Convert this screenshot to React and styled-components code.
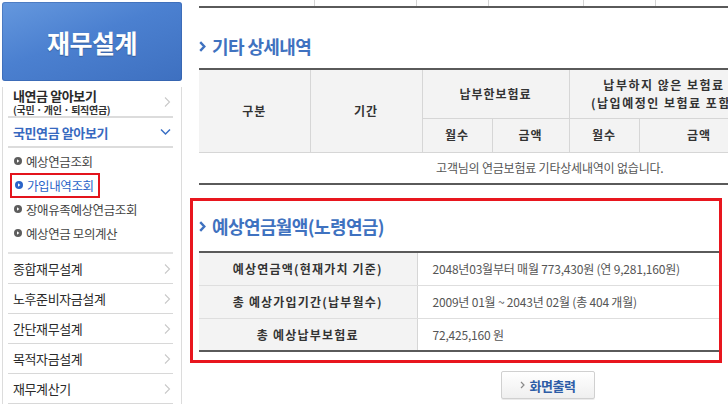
import React from 'react';
import styled, { createGlobalStyle } from 'styled-components';

const Global = createGlobalStyle`
  html, body { margin: 0; padding: 0; background: #fff; }
  body {
    width: 728px; height: 406px; overflow: hidden;
    font-family: "Noto Sans CJK KR", "Noto Sans", sans-serif;
    color: #333;
  }
  * { box-sizing: border-box; }
`;

const Page = styled.div`
  display: flex;
  align-items: flex-start;
  width: 728px;
  height: 406px;
  overflow: hidden;
`;

/* ---------- Sidebar ---------- */
const Sidebar = styled.aside`
  width: 180px;
  margin: 2px 0 0 2px;
  flex-shrink: 0;
`;

const Brand = styled.div`
  height: 79px;
  border-radius: 3px;
  background: linear-gradient(160deg, #6598de 0%, #4b80d0 45%, #3e70c0 100%);
  box-shadow: inset 0 0 0 1px rgba(40, 80, 150, 0.35);
  display: flex;
  align-items: center;
  justify-content: center;
  color: #fff;
  font-size: 25px;
  font-weight: 700;
  letter-spacing: -0.5px;
  text-shadow: 0 1px 1px rgba(0, 0, 0, 0.25);
`;

const Nav = styled.nav`
  margin-top: 6px;
  border-left: 1px solid #dcdcdc;
  border-right: 1px solid #dcdcdc;
  padding: 0 8px 0 5px;
`;

const NavItem = styled.div`
  position: relative;
  display: flex;
  flex-direction: column;
  justify-content: center;
  height: ${p => p.$h}px;
  padding: 0 5px;
  border-bottom: ${p => p.$bw}px solid ${p => p.$bc};
  color: ${p => (p.$active ? '#3769c0' : '#2a2a2a')};
  font-size: 13px;
  font-weight: ${p => (p.$bold ? 700 : 400)};
  letter-spacing: -0.4px;
  line-height: 15px;
`;

const NavSub = styled.span`
  font-size: 10px;
  line-height: 12px;
  font-weight: 700;
  letter-spacing: -0.3px;
  color: #333;
  margin-top: 1px;
`;

const Chevron = styled.svg`
  position: absolute;
  right: 2px;
  top: 50%;
  transform: translateY(-50%);
`;

const SubList = styled.ul`
  list-style: none;
  margin: 0;
  padding: 1px 0 7px;
  border-bottom: 2px solid #e3e3e3;
`;

const SubItem = styled.li`
  display: flex;
  align-items: center;
  gap: 4px;
  height: 24px;
  padding-left: 6px;
  font-size: 12.5px;
  letter-spacing: -0.4px;
  color: ${p => (p.$active ? '#2a63c8' : '#444')};
`;

const Highlight = styled.span`
  display: inline-flex;
  align-items: center;
  gap: 4px;
  margin-left: -4px;
  padding: 1px 4px 1px 3px;
  border: 2px solid #e3141c;
`;

const Bullet = ({ color }) => (
  <svg width="8" height="8" viewBox="0 0 8 8">
    <circle cx="4" cy="4" r="4" fill={color} />
    <path d="M3 2.2 L5.4 4 L3 5.8 Z" fill="#fff" />
  </svg>
);

const RightChevron = () => (
  <Chevron width="7" height="11" viewBox="0 0 7 11">
    <path d="M1 1 L5.5 5.5 L1 10" fill="none" stroke="#c9c9c9" strokeWidth="1.1" />
  </Chevron>
);

const DownChevron = () => (
  <Chevron width="11" height="7" viewBox="0 0 11 7">
    <path d="M1 1 L5.5 5.5 L10 1" fill="none" stroke="#3a6fc4" strokeWidth="1.5" />
  </Chevron>
);

/* ---------- Main ---------- */
const Main = styled.main`
  width: 702px;
  flex-shrink: 0;
  margin-left: 17px;
`;

const Remnant = styled.div`
  display: grid;
  grid-template-columns: 116px 102px 72px 95px 72px 1fr;
  height: 8px;
  border-bottom: 2px solid #5a5a5a;
`;

const RemnantCell = styled.div`
  border-right: 1px solid #d4d4d4;
`;

const Heading = styled.h2`
  display: flex;
  align-items: center;
  gap: 6px;
  margin: ${p => p.$mt}px 0 0;
  height: 22px;
  font-size: 18px;
  font-weight: 700;
  letter-spacing: -0.6px;
  color: #3f72c0;
`;

const HeadChevron = () => (
  <svg width="7" height="11" viewBox="0 0 7 11">
    <path d="M1.2 1.2 L5.3 5.5 L1.2 9.8" fill="none" stroke="#3f72c0" strokeWidth="2.4" />
  </svg>
);

const Table = styled.table`
  width: ${p => p.$w}px;
  margin-top: ${p => p.$mt}px;
  border-collapse: collapse;
  table-layout: fixed;
  border-top: 2px solid #5a5a5a;
  border-bottom: 2px solid #5a5a5a;
  font-size: 12px;
`;

const Th = styled.th`
  height: ${p => p.$h}px;
  padding: 0;
  background: #f3f3f3;
  border: 1px solid #d6d6d6;
  border-top: none;
  font-weight: 700;
  color: #333;
  letter-spacing: ${p => p.$ls || 1}px;
  line-height: 18px;
  text-align: center;
  white-space: nowrap;
  &:first-child { border-left: none; }
`;

const Td = styled.td`
  height: ${p => p.$h}px;
  padding: 0 0 0 ${p => p.$pl || 0}px;
  border-bottom: 1px solid #dedede;
  color: #555;
  letter-spacing: -0.2px;
  text-align: ${p => p.$align || 'left'};
  white-space: nowrap;
`;

const RowHead = styled.th`
  width: 218px;
  height: 33px;
  padding: 0;
  background: #f3f3f3;
  border-bottom: 1px solid #dedede;
  border-right: 1px solid #d6d6d6;
  font-weight: 700;
  color: #333;
  letter-spacing: 1.2px;
  text-align: center;
  white-space: nowrap;
`;

const Marked = styled.section`
  width: 532px;
  height: 165px;
  margin: 13px 0 0 -9px;
  padding: 14px 0 0 6px;
  border: 3px solid #e8161e;
  overflow: hidden;
`;

const ButtonRow = styled.div`
  display: flex;
  justify-content: center;
  margin-top: 8px;
  padding-right: 4px;
`;

const PrintButton = styled.button`
  display: flex;
  align-items: center;
  justify-content: center;
  gap: 4px;
  width: 94px;
  height: 28px;
  border: 1px solid #d0d0d0;
  border-radius: 2px;
  background: linear-gradient(#ffffff, #efefef);
  box-shadow: 0 1px 0 rgba(0, 0, 0, 0.08);
  font-family: inherit;
  font-size: 13px;
  font-weight: 700;
  letter-spacing: -0.4px;
  color: #2e5da6;
  padding: 0;
`;

const menu = ['종합재무설계', '노후준비자금설계', '간단재무설계', '목적자금설계', '재무계산기'];
const subs = ['예상연금조회', '가입내역조회', '장애유족예상연금조회', '예상연금 모의계산'];

export default function App() {
  return (
    <Page>
      <Global />
      <Sidebar>
        <Brand>재무설계</Brand>
        <Nav>
          <NavItem $h={31} $bw={2} $bc="#dcdcdc" $bold>
            내연금 알아보기
            <NavSub>(국민 · 개인 · 퇴직연금)</NavSub>
            <RightChevron />
          </NavItem>
          <NavItem $h={30} $bw={2} $bc="#dcdcdc" $bold $active>
            국민연금 알아보기
            <DownChevron />
          </NavItem>
          <SubList>
            {subs.map(s =>
              s === '가입내역조회' ? (
                <SubItem key={s} $active>
                  <Highlight>
                    <Bullet color="#2a63c8" />
                    {s}
                  </Highlight>
                </SubItem>
              ) : (
                <SubItem key={s}>
                  <Bullet color="#5d5d5d" />
                  {s}
                </SubItem>
              )
            )}
          </SubList>
          {menu.map(m => (
            <NavItem key={m} $h={30} $bw={1} $bc="#d8d8d8">
              {m}
              <RightChevron />
            </NavItem>
          ))}
        </Nav>
      </Sidebar>

      <Main>
        <Remnant>
          <RemnantCell />
          <RemnantCell />
          <RemnantCell />
          <RemnantCell />
          <RemnantCell />
          <div />
        </Remnant>

        <Heading $mt={27}>
          <HeadChevron />
          기타 상세내역
        </Heading>

        <Table $w={702} $mt={11}>
          <colgroup>
            <col style={{ width: 111 }} />
            <col style={{ width: 112 }} />
            <col style={{ width: 70 }} />
            <col style={{ width: 77 }} />
            <col style={{ width: 70 }} />
            <col style={{ width: 120 }} />
            <col />
          </colgroup>
          <thead>
            <tr>
              <Th rowSpan={2} $h={49}>구분</Th>
              <Th rowSpan={2} $h={49}>기간</Th>
              <Th colSpan={2} $h={49}>납부한보험료</Th>
              <Th colSpan={2} $h={49} $ls={1.5}>
                납부하지 않은 보험료
                <br />
                (납입예정인 보험료 포함)
              </Th>
              <Th rowSpan={2} $h={49}>비고</Th>
            </tr>
            <tr>
              <Th $h={34}>월수</Th>
              <Th $h={34}>금액</Th>
              <Th $h={34}>월수</Th>
              <Th $h={34}>금액</Th>
            </tr>
          </thead>
          <tbody>
            <tr>
              <Td colSpan={7} $h={32} $align="center">
                고객님의 연금보험료 기타상세내역이 없습니다.
              </Td>
            </tr>
          </tbody>
        </Table>

        <Marked>
          <Heading $mt={0}>
            <HeadChevron />
            예상연금월액(노령연금)
          </Heading>
          <Table $w={702} $mt={14}>
            <tbody>
              <tr>
                <RowHead>예상연금액(현재가치 기준)</RowHead>
                <Td $h={33} $pl={15}>2048년03월부터 매월 773,430원 (연 9,281,160원)</Td>
              </tr>
              <tr>
                <RowHead>총 예상가입기간(납부월수)</RowHead>
                <Td $h={33} $pl={15}>2009년 01월 ~ 2043년 02월 (총 404 개월)</Td>
              </tr>
              <tr>
                <RowHead>총 예상납부보험료</RowHead>
                <Td $h={33} $pl={15}>72,425,160 원</Td>
              </tr>
            </tbody>
          </Table>
        </Marked>

        <ButtonRow>
          <PrintButton type="button">
            <svg width="5" height="8" viewBox="0 0 5 8">
              <path d="M1 1 L4 4 L1 7" fill="none" stroke="#8a8a8a" strokeWidth="1.2" />
            </svg>
            화면출력
          </PrintButton>
        </ButtonRow>
      </Main>
    </Page>
  );
}
